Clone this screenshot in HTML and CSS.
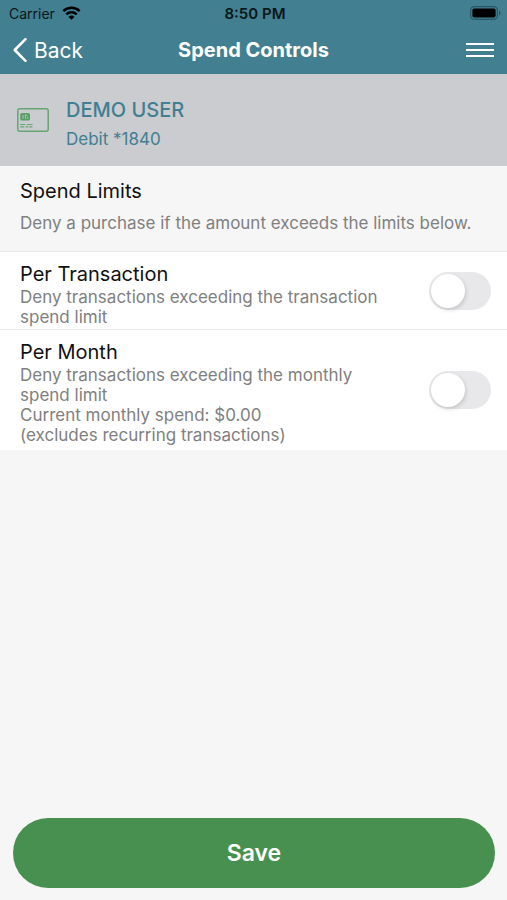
FILE: index.html
```html
<!DOCTYPE html>
<html lang="en">
<head>
<meta charset="utf-8">
<meta name="viewport" content="width=device-width, initial-scale=1">
<title>Spend Controls</title>
<link rel="stylesheet" href="styles.css">
</head>
<body>
<header class="top">
  <div class="status">
    <div class="carrier">
      <span>Carrier</span>
      <svg class="wifi" viewBox="0 0 18 14" width="19" height="14" aria-hidden="true">
        <g fill="none" stroke="#000" stroke-width="2.5">
          <path d="M.9 5.1a11.5 11.5 0 0 1 16.2 0"/>
          <path d="M3.8 8.3a7.4 7.4 0 0 1 10.4 0"/>
        </g>
        <path d="M9 13.8 6 10.9a4.3 4.3 0 0 1 6 0z"/>
      </svg>
    </div>
    <div class="clock">8:50 PM</div>
    <svg class="battery" viewBox="0 0 31 14" width="31" height="14" aria-hidden="true">
      <rect x=".6" y=".6" width="26.8" height="12.8" rx="3.6" fill="none" stroke="#285763" stroke-width="1.2"/>
      <rect x="2.4" y="2.4" width="23.2" height="9.2" rx="1.8"/>
      <path d="M29 4.8c2 .8 2 3.6 0 4.4z" fill="#285763"/>
    </svg>
  </div>
  <nav class="nav">
    <a class="back" href="#">
      <svg viewBox="0 0 14 24" width="14" height="24" aria-hidden="true"><path d="M12.5 1.2 1.7 12l10.8 10.8" fill="none" stroke="#fff" stroke-width="2.5" stroke-linecap="round" stroke-linejoin="round"/></svg>
      <span>Back</span>
    </a>
    <h1 class="title">Spend Controls</h1>
    <button class="menu" type="button" aria-label="Menu">
      <svg viewBox="0 0 28 16" width="28" height="16" aria-hidden="true"><path d="M0 2h28M0 8h28M0 14h28" stroke="#fff" stroke-width="2"/></svg>
    </button>
  </nav>
</header>
<section class="account">
  <svg viewBox="0 0 32 24" width="32" height="24" aria-hidden="true">
    <rect x=".8" y=".8" width="30.4" height="22.4" rx="2" fill="none" stroke="#65a572" stroke-width="1.5"/>
    <rect x="3.2" y="5" width="9.8" height="7.6" rx="1.6" fill="#5a9f68"/>
    <path d="M6 6.8v4M8.4 6.8v4M8.4 7h2M10.6 8.6v2.2" fill="none" stroke="#b8cfbe" stroke-width=".8"/>
    <path d="M3.2 16.5h5M9.6 16.5h6M3.2 18.9h4.2M8.6 18.9h2.8M12.2 18.9h3.2" stroke="#65a572" stroke-width="1.2"/>
  </svg>
  <div class="holder">
    <div class="name">DEMO USER</div>
    <div class="card">Debit *1840</div>
  </div>
</section>
<main>
  <section class="intro">
    <h2 class="heading">Spend Limits</h2>
    <p class="desc">Deny a purchase if the amount exceeds the limits below.</p>
  </section>
  <div class="row">
    <div class="text">
      <label class="heading" for="per-transaction">Per Transaction</label>
      <p class="desc">Deny transactions exceeding the transaction spend limit</p>
    </div>
    <input class="switch" type="checkbox" id="per-transaction">
  </div>
  <div class="row">
    <div class="text">
      <label class="heading" for="per-month">Per Month</label>
      <p class="desc">Deny transactions exceeding the monthly spend limit<br>Current monthly spend: $0.00<br>(excludes recurring transactions)</p>
    </div>
    <input class="switch" type="checkbox" id="per-month">
  </div>
</main>
<footer class="footer">
  <button class="save" type="button">Save</button>
</footer>
</body>
</html>
```
FILE: styles.css
```css
* {
  box-sizing: border-box;
}

body {
  margin: 0;
  min-height: 100vh;
  display: flex;
  flex-direction: column;
  background: #f6f6f6;
  color: #111;
  font-family: Inter, "Liberation Sans", sans-serif;
}

h1,
h2,
p {
  margin: 0;
}

svg {
  display: block;
  flex: none;
}

.top {
  background: #427f90;
}

.status,
.nav {
  display: grid;
  grid-template-columns: 1fr auto 1fr;
  align-items: center;
}

.status {
  height: 26px;
  padding: 0 6px 0 9px;
  color: #0b1619;
  font-size: 14px;
}

.carrier {
  display: flex;
  align-items: center;
  gap: 7px;
}

.clock {
  font-size: 15px;
  font-weight: 600;
}

.battery,
.menu {
  justify-self: end;
}

.nav {
  height: 48px;
  padding: 0 13px;
  color: #fff;
}

.back {
  display: flex;
  align-items: center;
  gap: 7px;
  color: inherit;
  font-size: 21px;
  text-decoration: none;
}

.title {
  font-size: 20px;
  font-weight: 700;
}

.menu {
  padding: 0;
  border: 0;
  background: none;
}

.account {
  display: flex;
  align-items: center;
  gap: 17px;
  height: 92px;
  padding: 0 17px;
  background: #cbccd0;
  color: #427f90;
}

.holder {
  padding-top: 6px;
}

.name {
  font-size: 20px;
  font-weight: 500;
  line-height: 32px;
}

.card {
  font-size: 17px;
  line-height: 26px;
}

.heading {
  display: block;
  font-size: 20px;
  font-weight: 400;
  line-height: 25px;
}

.desc {
  color: #808080;
  font-size: 17px;
  line-height: 20px;
}

.intro {
  display: grid;
  gap: 9px;
  padding: 13px 20px 18px;
}

.row {
  display: flex;
  align-items: center;
  gap: 48px;
  padding: 0 16px 0 20px;
  border-top: 1px solid #e9e9ea;
  background: #fff;
}

.text {
  flex: 1;
  padding: 10px 0 2px;
}

.row:last-child .text {
  padding-bottom: 5px;
}

.switch {
  appearance: none;
  flex: none;
  display: flex;
  width: 62px;
  height: 38px;
  margin: 0;
  padding: 2px;
  border-radius: 19px;
  background: #e8e8ea;
}

.switch::before {
  content: "";
  width: 34px;
  height: 34px;
  border-radius: 50%;
  background: #fff;
  box-shadow: 1px 2px 4px rgba(0, 0, 0, 0.15);
}

.switch:checked {
  justify-content: flex-end;
  background: #48904f;
}

.footer {
  margin-top: auto;
  padding: 12px 12px 12px 13px;
}

.save {
  display: block;
  width: 100%;
  height: 70px;
  border: 0;
  border-radius: 35px;
  background: #48904f;
  color: #fff;
  font: 600 23px Inter, "Liberation Sans", sans-serif;
}
```
